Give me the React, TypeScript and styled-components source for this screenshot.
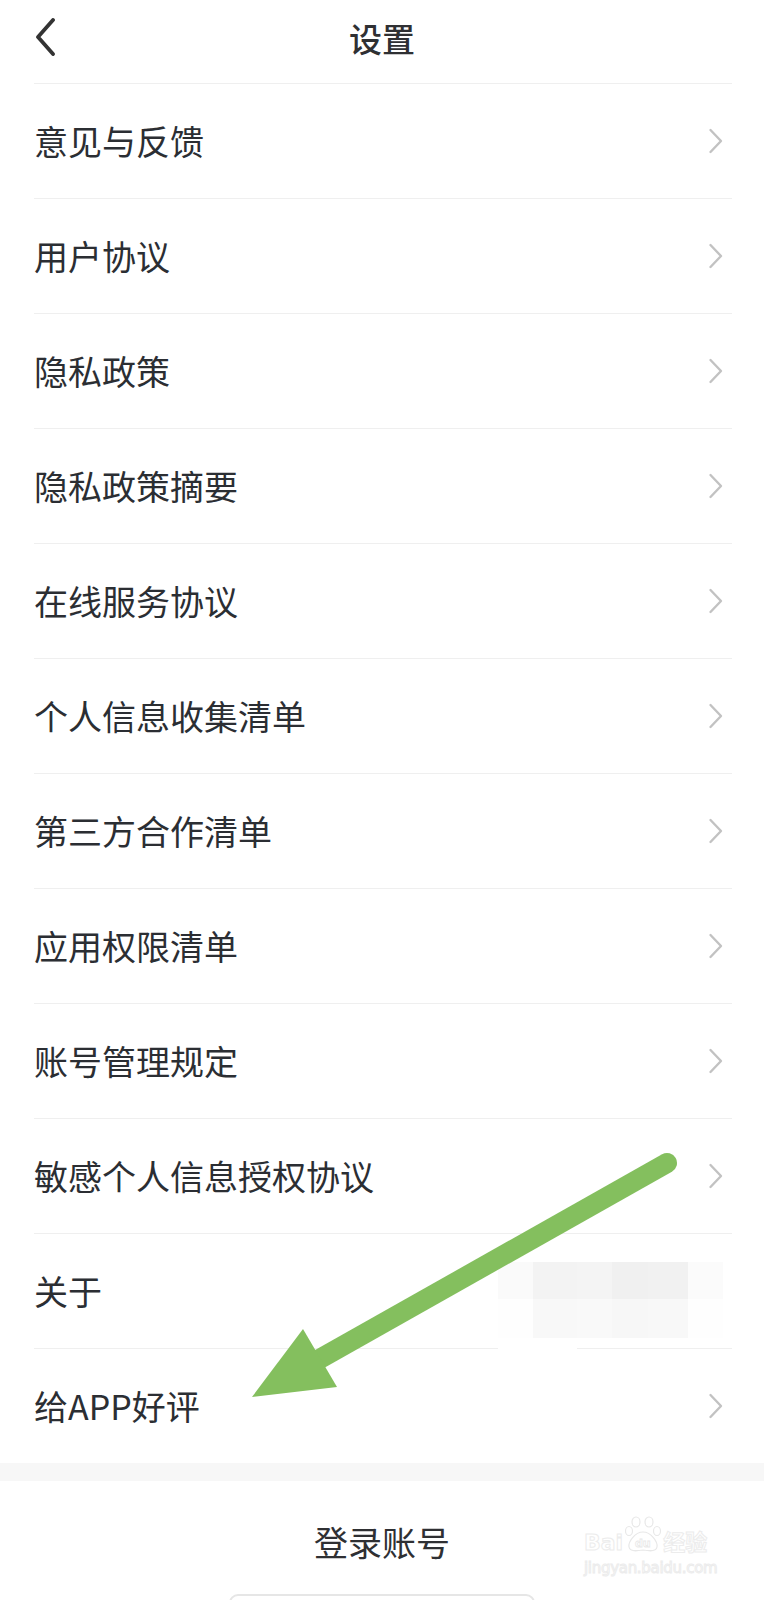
import React from 'react'
import styled, { createGlobalStyle } from 'styled-components'

const GlobalStyle = createGlobalStyle`
  html, body {
    margin: 0;
    padding: 0;
    background: #ffffff;
  }
  body {
    font-family: "Noto Sans CJK SC", "Noto Sans", sans-serif;
    color: #2b2e33;
  }
`

const Page = styled.div`
  position: relative;
  width: 764px;
  height: 1600px;
  overflow: hidden;
  background: #ffffff;
`

const Header = styled.header`
  height: 83px;
  display: flex;
  align-items: center;
  justify-content: center;
  position: relative;
`

const BackButton = styled.button`
  position: absolute;
  left: 30px;
  top: 15px;
  width: 30px;
  height: 44px;
  padding: 0;
  border: none;
  background: none;
  display: flex;
  align-items: center;
  justify-content: center;
`

const Title = styled.h1`
  margin: 0 0 8px;
  font-size: 33px;
  font-weight: 500;
  color: #2f3033;
`

const List = styled.ul`
  list-style: none;
  margin: 0;
  padding: 0 32px 0 34px;
`

const Row = styled.li`
  height: 115px;
  box-sizing: border-box;
  border-top: 1px solid #efefef;
  display: flex;
  align-items: center;
  justify-content: space-between;
  padding-right: 8px;
`

const RowLabel = styled.span`
  font-size: 34px;
  line-height: 1;
  color: #2b2e33;
`

const Gap = styled.div`
  height: 18px;
  background: #f7f7f7;
`

const Footer = styled.div`
  display: flex;
  flex-direction: column;
  align-items: center;
  padding-top: 44px;
`

const LoginText = styled.span`
  font-size: 34px;
  color: #2f3033;
  line-height: 1;
`

const OutlineBox = styled.div`
  margin-top: 35px;
  width: 306px;
  height: 60px;
  box-sizing: border-box;
  border: 2px solid #e6e6e6;
  border-radius: 9px;
`

const Mosaic = styled.div`
  position: absolute;
  left: 498px;
  top: 1262px;
  display: grid;
  grid-template-columns: 35px 44px 35px 36px 40px 35px;
  grid-template-rows: 37px 39px 16px;
`

const MosaicCell = styled.div<{ shade: string }>`
  background: ${(p) => p.shade};
`

const Watermark = styled.div`
  position: absolute;
  left: 584px;
  top: 1516px;
  display: flex;
  flex-direction: column;
  align-items: flex-start;
  color: transparent;
  -webkit-text-stroke: 1px #ececec;
  font-family: "DejaVu Sans", "Noto Sans CJK SC", sans-serif;
`

const MarkTop = styled.div`
  display: flex;
  align-items: flex-end;
  font-size: 22px;
  line-height: 1;
  font-weight: 700;
`

const MarkUrl = styled.div`
  margin-top: 7px;
  font-size: 15px;
  line-height: 1;
  letter-spacing: -0.3px;
`

const ArrowLayer = styled.svg`
  position: absolute;
  left: 0;
  top: 0;
  pointer-events: none;
`

const items = [
  '意见与反馈',
  '用户协议',
  '隐私政策',
  '隐私政策摘要',
  '在线服务协议',
  '个人信息收集清单',
  '第三方合作清单',
  '应用权限清单',
  '账号管理规定',
  '敏感个人信息授权协议',
  '关于',
  '给APP好评',
]

const mosaicShades = [
  '#fafafa', '#f3f3f3', '#f4f4f4', '#f0f0f0', '#f1f1f1', '#fbfbfb',
  '#fefefe', '#f8f8f8', '#f9f9f9', '#f7f7f7', '#f8f8f8', '#fefefe',
  '#ffffff', '#ffffff', 'transparent', 'transparent', 'transparent', 'transparent',
]

const Chevron = () => (
  <svg width="16" height="26" viewBox="0 0 16 26">
    <path
      d="M2.5 2 L13 13 L2.5 24"
      fill="none"
      stroke="#c2c2c2"
      strokeWidth="2.4"
      strokeLinecap="round"
      strokeLinejoin="round"
    />
  </svg>
)

const BackIcon = () => (
  <svg width="24" height="38" viewBox="0 0 24 38">
    <path
      d="M20 2 L5 19 L20 36"
      fill="none"
      stroke="#333333"
      strokeWidth="3.8"
      strokeLinecap="round"
      strokeLinejoin="round"
    />
  </svg>
)

const Paw = () => (
  <svg width="40" height="38" viewBox="0 0 40 38" fill="none" stroke="#e8e8e8" strokeWidth="1.2">
    <ellipse cx="13" cy="6" rx="4" ry="5" />
    <ellipse cx="26" cy="6" rx="4" ry="5" />
    <ellipse cx="6" cy="15" rx="3.5" ry="4.5" />
    <ellipse cx="34" cy="15" rx="3.5" ry="4.5" />
    <path d="M20 16 C12 16 5 26 6 31 C7 36 14 35 20 34 C26 35 33 36 34 31 C35 26 28 16 20 16 Z" />
    <text x="12" y="31" fontSize="11" fontFamily="DejaVu Sans" fill="none" stroke="#e8e8e8" strokeWidth="0.8">
      du
    </text>
  </svg>
)

const App: React.FC = () => {
  return (
    <Page>
      <GlobalStyle />
      <Header>
        <BackButton aria-label="返回">
          <BackIcon />
        </BackButton>
        <Title>设置</Title>
      </Header>

      <List>
        {items.map((label) => (
          <Row key={label}>
            <RowLabel>{label}</RowLabel>
            <Chevron />
          </Row>
        ))}
      </List>

      <Gap />

      <Footer>
        <LoginText>登录账号</LoginText>
        <OutlineBox />
      </Footer>

      <Mosaic>
        {mosaicShades.map((shade, i) => (
          <MosaicCell key={i} shade={shade} />
        ))}
      </Mosaic>

      <Watermark>
        <MarkTop>
          <span>Bai</span>
          <Paw />
          <span>经验</span>
        </MarkTop>
        <MarkUrl>jingyan.baidu.com</MarkUrl>
      </Watermark>

      <ArrowLayer width="764" height="1600" viewBox="0 0 764 1600">
        <line
          x1="667"
          y1="1163"
          x2="316"
          y2="1361"
          stroke="#84bf5e"
          strokeWidth="20"
          strokeLinecap="round"
        />
        <polygon points="303,1329 337,1387 252,1397" fill="#84bf5e" />
      </ArrowLayer>
    </Page>
  )
}

export default App
